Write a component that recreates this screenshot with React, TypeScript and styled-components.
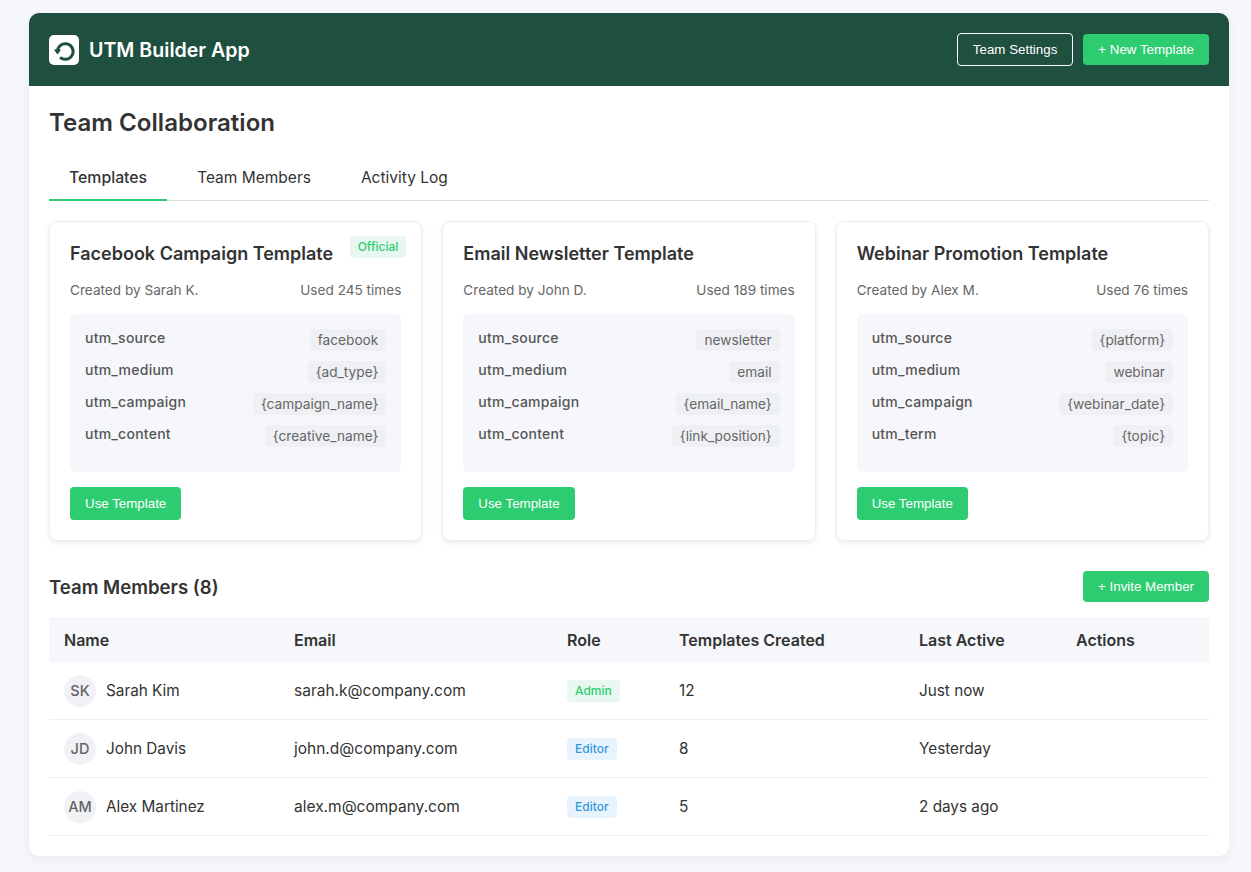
import { createGlobalStyle, styled } from "styled-components";

const GlobalStyle = createGlobalStyle`
  * {
    box-sizing: border-box;
  }
  body {
    margin: 0;
    background-color: #f5f7fa;
    color: #333;
    font-family: Inter, "Noto Sans", sans-serif;
  }
`;

const Page = styled.div`
  padding: 13px 22px 16px 29px;
`;

const Container = styled.div`
  background-color: #fff;
  border-radius: 10px;
  overflow: hidden;
  box-shadow: 0 4px 12px rgba(0, 0, 0, 0.05);
`;

const Header = styled.header`
  display: flex;
  align-items: center;
  justify-content: space-between;
  padding: 20px;
  background-color: #1f4f3f;
`;

const Brand = styled.div`
  display: flex;
  align-items: center;
  gap: 10px;
  color: #fff;
  font-size: 19.6px;
  font-weight: 600;
`;

const Logo = styled.div`
  display: flex;
  align-items: center;
  justify-content: center;
  width: 30px;
  height: 30px;
  background-color: #fff;
  border-radius: 5px;
`;

const HeaderActions = styled.div`
  display: flex;
  align-items: center;
  gap: 10px;
`;

const Button = styled.button<{ $outline?: boolean; $tall?: boolean }>`
  padding: ${(p) => (p.$tall ? "9px" : "8px")} 15px;
  border: ${(p) => (p.$outline ? "1px solid #fff" : "0")};
  border-radius: 4px;
  background-color: ${(p) => (p.$outline ? "transparent" : "#2ecc71")};
  color: #fff;
  font-family: "Liberation Sans", Arial, sans-serif;
  font-size: 13.33px;
  line-height: 15px;
`;

const Content = styled.main`
  padding: 20px;
`;

const Title = styled.h1`
  margin: 0 0 16px;
  font-size: 24.1px;
  line-height: 33px;
  font-weight: 600;
`;

const Tabs = styled.div`
  display: flex;
  gap: 10px;
  border-bottom: 1px solid #ddd;
  margin-bottom: 20px;
`;

const Tab = styled.div<{ $active?: boolean }>`
  height: 46px;
  padding: 0 20px;
  margin-bottom: -1px;
  line-height: 46px;
  font-size: ${(p) => (p.$active ? "15.8px" : "15.5px")};
  font-weight: ${(p) => (p.$active ? 500 : 400)};
  border-bottom: 2px solid ${(p) => (p.$active ? "#2ecc71" : "transparent")};
`;

const CardGrid = styled.div`
  display: grid;
  grid-template-columns: repeat(3, 1fr);
  gap: 20px;
  margin-bottom: 30px;
`;

const Card = styled.article`
  position: relative;
  padding: 20px;
  border: 1px solid #eee;
  border-radius: 8px;
  box-shadow: 0 2px 5px rgba(0, 0, 0, 0.08);
`;

const OfficialBadge = styled.span`
  position: absolute;
  top: 14px;
  right: 15px;
  padding: 3px 8px;
  border-radius: 4px;
  background-color: #e8f8f0;
  color: #2ecc71;
  font-size: 12px;
  line-height: 16px;
  font-weight: 500;
`;

const CardTitle = styled.h3`
  margin: 0 0 15px;
  font-size: 18px;
  line-height: 24px;
  font-weight: 600;
`;

const Meta = styled.div`
  display: flex;
  justify-content: space-between;
  margin-bottom: 15px;
  color: #666;
  font-size: 13.6px;
  line-height: 18px;
`;

const Params = styled.div`
  padding: 15px;
  margin-bottom: 15px;
  background-color: #f5f7fa;
  border-radius: 6px;
`;

const ParamRow = styled.div`
  display: flex;
  justify-content: space-between;
  margin-bottom: 10px;
`;

const ParamName = styled.span`
  font-size: 14px;
  letter-spacing: 0.25px;
  line-height: 18px;
  font-weight: 500;
  color: #555;
`;

const ParamValue = styled.span`
  padding: 2px 8px;
  background-color: #eef0f3;
  border-radius: 4px;
  color: #666;
  font-size: 13.7px;
  line-height: 18px;
`;

const SectionHead = styled.div`
  display: flex;
  align-items: center;
  justify-content: space-between;
  margin-bottom: 15px;
`;

const SectionTitle = styled.h2`
  margin: 0;
  font-size: 18.6px;
  font-weight: 600;
`;

const Table = styled.table`
  width: 100%;
  table-layout: fixed;
  border-collapse: separate;
  border-spacing: 0;
`;

const Th = styled.th<{ $w: number }>`
  width: ${(p) => p.$w}px;
  height: 45px;
  padding: 0 15px;
  background-color: #f5f7fa;
  text-align: left;
  font-size: 16px;
  font-weight: 600;
`;

const Td = styled.td`
  height: 58px;
  padding: 0 15px;
  border-bottom: 1px solid #eee;
  font-size: 15.3px;
`;

const EmailTd = styled(Td)`
  font-size: 15.5px;
`;

const MemberCell = styled.div`
  display: flex;
  align-items: center;
  gap: 10px;
`;

const Avatar = styled.div`
  display: flex;
  align-items: center;
  justify-content: center;
  width: 32px;
  height: 32px;
  border-radius: 50%;
  background-color: #f0f2f5;
  color: #666;
  font-size: 14.5px;
  font-weight: 500;
`;

const RoleBadge = styled.span<{ $role: string }>`
  display: inline-block;
  padding: 3px 8px;
  border-radius: 4px;
  font-size: 12px;
  line-height: 16px;
  font-weight: 500;
  vertical-align: middle;
  background-color: ${(p) => (p.$role === "Admin" ? "#e8f8f0" : "#e8f4fd")};
  color: ${(p) => (p.$role === "Admin" ? "#2ecc71" : "#3498db")};
`;

const templates = [
  {
    name: "Facebook Campaign Template",
    official: true,
    author: "Sarah K.",
    used: 245,
    params: [
      ["utm_source", "facebook"],
      ["utm_medium", "{ad_type}"],
      ["utm_campaign", "{campaign_name}"],
      ["utm_content", "{creative_name}"],
    ],
  },
  {
    name: "Email Newsletter Template",
    author: "John D.",
    used: 189,
    params: [
      ["utm_source", "newsletter"],
      ["utm_medium", "email"],
      ["utm_campaign", "{email_name}"],
      ["utm_content", "{link_position}"],
    ],
  },
  {
    name: "Webinar Promotion Template",
    author: "Alex M.",
    used: 76,
    params: [
      ["utm_source", "{platform}"],
      ["utm_medium", "webinar"],
      ["utm_campaign", "{webinar_date}"],
      ["utm_term", "{topic}"],
    ],
  },
];

const members = [
  { initials: "SK", name: "Sarah Kim", email: "sarah.k@company.com", role: "Admin", count: 12, active: "Just now" },
  { initials: "JD", name: "John Davis", email: "john.d@company.com", role: "Editor", count: 8, active: "Yesterday" },
  { initials: "AM", name: "Alex Martinez", email: "alex.m@company.com", role: "Editor", count: 5, active: "2 days ago" },
];

const columns: [string, number][] = [
  ["Name", 230],
  ["Email", 273],
  ["Role", 112],
  ["Templates Created", 240],
  ["Last Active", 157],
  ["Actions", 148],
];

export default function App() {
  return (
    <>
      <GlobalStyle />
      <Page>
        <Container>
          <Header>
            <Brand>
              <Logo>
                <svg width="24" height="24" viewBox="0 0 24 24" fill="none" stroke="#1f4f3f" strokeWidth="3">
                  <path d="M5.5 13.5a7.8 7.8 0 1 1 2.6 5.8" />
                  <path d="M1.8 11.4h7.4l-3.7 5z" fill="#1f4f3f" stroke="none" />
                </svg>
              </Logo>
              UTM Builder App
            </Brand>
            <HeaderActions>
              <Button $outline>Team Settings</Button>
              <Button>+ New Template</Button>
            </HeaderActions>
          </Header>
          <Content>
            <Title>Team Collaboration</Title>
            <Tabs>
              <Tab $active>Templates</Tab>
              <Tab>Team Members</Tab>
              <Tab>Activity Log</Tab>
            </Tabs>
            <CardGrid>
              {templates.map((t) => (
                <Card key={t.name}>
                  {t.official ? <OfficialBadge>Official</OfficialBadge> : null}
                  <CardTitle>{t.name}</CardTitle>
                  <Meta>
                    <span>Created by {t.author}</span>
                    <span>Used {t.used} times</span>
                  </Meta>
                  <Params>
                    {t.params.map(([k, v]) => (
                      <ParamRow key={k}>
                        <ParamName>{k}</ParamName>
                        <ParamValue>{v}</ParamValue>
                      </ParamRow>
                    ))}
                  </Params>
                  <Button $tall>Use Template</Button>
                </Card>
              ))}
            </CardGrid>
            <SectionHead>
              <SectionTitle>Team Members (8)</SectionTitle>
              <Button>+ Invite Member</Button>
            </SectionHead>
            <Table>
              <thead>
                <tr>
                  {columns.map(([label, w]) => (
                    <Th key={label} $w={w}>
                      {label}
                    </Th>
                  ))}
                </tr>
              </thead>
              <tbody>
                {members.map((m) => (
                  <tr key={m.email}>
                    <Td>
                      <MemberCell>
                        <Avatar>{m.initials}</Avatar>
                        {m.name}
                      </MemberCell>
                    </Td>
                    <EmailTd>{m.email}</EmailTd>
                    <Td>
                      <RoleBadge $role={m.role}>{m.role}</RoleBadge>
                    </Td>
                    <Td>{m.count}</Td>
                    <Td>{m.active}</Td>
                    <Td />
                  </tr>
                ))}
              </tbody>
            </Table>
          </Content>
        </Container>
      </Page>
    </>
  );
}
